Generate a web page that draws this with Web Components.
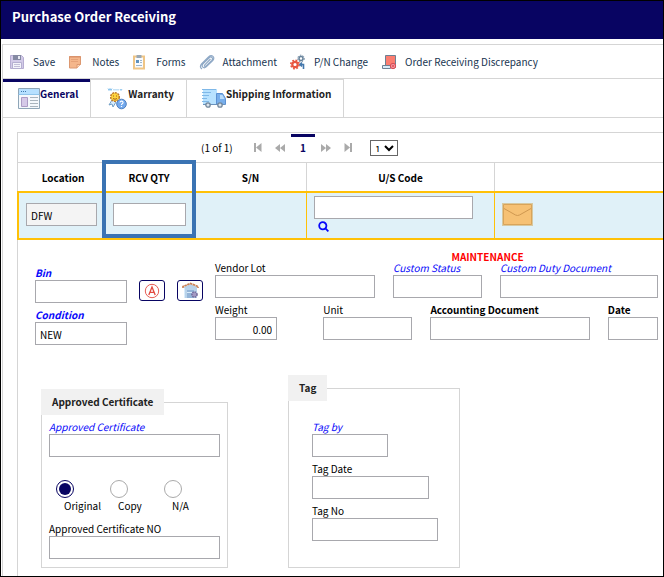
<!DOCTYPE html>
<html lang="en">
<head>
<meta charset="utf-8">
<title>Purchase Order Receiving</title>
<style>
html,body{margin:0}
body{--navy:#080462;--line:#d5d5d5;--field:#a8a8ad;--gold:#ffc107;--blue:#0808fa;
 font:10px/16px "Noto Sans CJK SC","Noto Sans",sans-serif;color:#000;background:#fff}
</style>
</head>
<body>
<receiving-page></receiving-page>
<script>
const BASE = `<style>*,*::before,*::after{box-sizing:border-box}
input,button,select{font:inherit;color:inherit;margin:0}
input:not([type=radio]){display:block;width:100%;height:23px;border:1px solid var(--field);border-radius:0;background:#fff;padding:2px 4px 0;outline:0}
svg{display:block}</style>`;
function define(name, html, setup) {
  const t = document.createElement('template');
  t.innerHTML = BASE + html;
  customElements.define(name, class extends HTMLElement {
    connectedCallback() {
      if (this.shadowRoot) return;
      const root = this.attachShadow({mode: 'open'});
      const content = t.content.cloneNode(true);
      if (setup) setup(this, content);
      root.append(content);
    }
  });
}
const ICONS = {
save:`<svg width="16" height="16" viewBox="0 0 16 16"><path d="M1.500 1.500h11l2 2v11h-13z" fill="#d3cbe8" stroke="#b6add2"/><path d="M4 1h8v5H4z" fill="#858aa3"/><path d="M9 2h2v3H9z" fill="#e8eaf2"/><path d="M3.500 8.500h9v6h-9z" fill="#f4f4fa" stroke="#b5afd0"/><path d="M5 10.500h6M5 12.500h6" stroke="#c3bfd8"/></svg>`,
notes:`<svg width="14" height="14" viewBox="0 0 14 14"><path d="M1.500 1.500h11v8l-3.500 3.500H1.500z" fill="#f5b78c" stroke="#dc9870"/><path d="M1 2h12" stroke="#d98f68"/><path d="M9 13V9.500h3.500" fill="#ffd6b6" stroke="#dc9870"/><path d="M3 4.500h7M3 6.500h7" stroke="#e6a278"/></svg>`,
forms:`<svg width="14" height="16" viewBox="0 0 14 16"><path d="M2 2.500h10v12H2z" fill="#f8fbff" stroke="#efc586" stroke-width="2"/><path d="M4.500 1h5v3h-5z" fill="#9aa8b4"/><path d="M4 6h3v3H4z" fill="#5e90bd"/><path d="M8 6.500h2M8 8.500h2M4 11.500h6" stroke="#9fb8ce"/></svg>`,
clip:`<svg width="16" height="16" viewBox="0 0 16 16" fill="none" stroke="#8fa9c6" stroke-width="1.200"><path d="m11.500 5-5.700 5.800c-1 1.200.3 2.300 1.400 1.200l5.600-5.700c2-2.200-.7-4.400-2.600-2.600L4 9.800c-2.200 2.600.6 5.300 3.200 3L13.700 6.500c3-3.200-.8-6.600-4.200-3.600L2.500 10c-2 2.400-.8 4 .5 5"/></svg>`,
gears:`<svg width="16" height="16" viewBox="0 0 16 16" fill="none"><circle cx="5" cy="10.500" r="2.700" stroke="#e8553f" stroke-width="2.200"/><circle cx="5" cy="10.500" r="4.200" stroke="#e8553f" stroke-width="1.600" stroke-dasharray="1.800 1.500"/><circle cx="11" cy="4.500" r="2" stroke="#66829b" stroke-width="1.500"/><circle cx="11" cy="4.500" r="3.300" stroke="#66829b" stroke-dasharray="1.500 1.300"/><path d="M10.500 10.500h3V15M12 8.500l-2 2 2 2" stroke="#4478ad" stroke-width="1.600"/></svg>`,
disc:`<svg width="16" height="16" viewBox="0 0 16 16"><path d="M4.500 1.500h10v12h-10z" fill="#fb7d70" stroke="#6c8193"/><path d="M1.500 11.500h8v3h-8z" fill="#d9ebf9" stroke="#6c8193"/><circle cx="12" cy="12" r="2.700" fill="#f2919a" stroke="#d84a54"/><path d="M11 11l2 2m0-2l-2 2" stroke="#d84a54" stroke-width=".7"/></svg>`,
general:`<svg width="22" height="22" viewBox="0 0 22 22"><path d="M.5.500h21v20H.5z" fill="#f4f8fc" stroke="#8fa6b8"/><path d="M1 1h20v5H1z" fill="#b6e0ff"/><path d="M.5 6.500h21" stroke="#8fc5ec"/><path d="M3 3.500h1m1 0h1m1 0h1" stroke="#3c78ad"/><path d="M3.500 9.500h6v9h-6z" fill="#d5c9e8" stroke="#ab9bc5"/><path d="M12 9.500h8M12 12.500h8M12 15.500h8M12 18.500h8" stroke="#a9b4bd"/></svg>`,
warranty:`<svg width="22" height="24" viewBox="0 0 22 24"><path d="M2 .5l1 2 1-2 1 2 1-2M8 2.500V1M10 2.500V1M12 2.500V1M14 1l1 1.500L16 1" fill="none" stroke="#6fb6e9" stroke-width=".8"/><path d="m6 12-3 5 3-1 1 3 3-5" fill="#d8edff" stroke="#729fc6"/><circle cx="9" cy="9" r="4.300" fill="#ffd43f" stroke="#bd7b30" stroke-width="1.500" stroke-dasharray="2 .8"/><path d="M7 8h1m2 0h1M7 10.500q2 1.500 4 0" stroke="#a26320" fill="none"/><circle cx="15.500" cy="16" r="4.800" fill="#73a9ed" stroke="#4f7fbe"/><path d="M14 14.500c.2-2 3.300-1.500 3 .2-.2 1-1.500 1-1.500 2.300M15.500 18v1" fill="none" stroke="#fff" stroke-width="1.200"/></svg>`,
truck:`<svg width="24" height="20" viewBox="0 0 24 20"><path d="M1 1h14v15H1z" fill="#b8e2ff"/><path d="M0 1.500h14M0 4.500h9M0 7.500h7M0 10.500h5M0 13.500h7" stroke="#7fb8e8"/><path d="M14.500 5.500h6l3 5v6h-9z" fill="#78aeea" stroke="#5c91d2"/><path d="M18 7h2.500l2 4H18z" fill="#b9dcfa"/><path d="M1 16.500h22" stroke="#6a92bd"/><circle cx="6" cy="17" r="2.200" fill="#dbe4ec" stroke="#71869b" stroke-width="1.300"/><circle cx="18" cy="17" r="2.200" fill="#dbe4ec" stroke="#71869b" stroke-width="1.300"/></svg>`,
first:`<svg width="8" height="9" viewBox="0 0 8 9" fill="#aaa"><path d="M0 0h2v9H0zM7.500 0v9L2 4.500z"/></svg>`,
prev:`<svg width="10" height="8" viewBox="0 0 10 8" fill="#aaa"><path d="M5 0v8L0 4zM10 0v8L5 4z"/></svg>`,
next:`<svg width="10" height="8" viewBox="0 0 10 8" fill="#aaa"><path d="M0 0v8l5-4zM5 0v8l5-4z"/></svg>`,
last:`<svg width="8" height="9" viewBox="0 0 8 9" fill="#aaa"><path d="M6 0h2v9H6zM.5 0v9L6 4.500z"/></svg>`,
search:`<svg width="11" height="11" viewBox="0 0 11 11" fill="none" stroke="#0808fa" stroke-width="1.800"><circle cx="4.800" cy="4.800" r="3.600"/><path d="m7.400 7.400 3 3"/></svg>`,
mail:`<svg width="31" height="23" viewBox="0 0 31 23"><path d="M1 1h29v21H1z" fill="#f6c174" stroke="#d8c9a0" stroke-width="2"/><path d="M1.500 1.500h28v20h-28z" fill="none" stroke="#d9a45a"/><path d="m2 5.500 11.500 6.500q2 1 4 0L29 5.500" fill="none" stroke="#cf9850"/></svg>`,
circleA:`<svg width="16" height="16" viewBox="0 0 16 16" fill="none" stroke="#e2493f"><circle cx="8" cy="8" r="6.700" stroke-width=".9"/><path d="M4.800 12 8 4l3.200 8M6 9.300h4" stroke-width="1.300"/></svg>`,
depot:`<svg width="17" height="17" viewBox="0 0 17 17"><path d="M2 5l6.500-3L15 5v11H2z" fill="#b9d3ea"/><path d="M5 8h7v8H5z" fill="#94b5d8"/><path d="M5 10.500h7M2.500 6v10" stroke="#d9ecfb"/><path d="M1 6V4.500l7.500-3 7.500 3V6" fill="none" stroke="#c98054" stroke-width="1.700" stroke-dasharray="2.500 .5"/><circle cx="12.500" cy="12.500" r="2.600" fill="#a39ac3" stroke="#6e6596" stroke-width="1.400" stroke-dasharray="1.500 .9"/></svg>`
};
define('po-icon', `<style>:host{display:block;flex:none}</style><span></span>`,
  (el, r) => r.querySelector('span').innerHTML = ICONS[el.getAttribute('name')]);

define('page-title', `<style>:host{display:block;background:var(--navy);color:#fff;padding:6px 11px 12px}
h1{margin:0;font-size:13px;line-height:20px;font-weight:700}</style><h1><slot></slot></h1>`);

define('tool-button', `<style>:host{display:block}
button{display:flex;align-items:center;gap:8px;border:0;background:none;padding:0;color:#173450;white-space:nowrap;line-height:16px}
po-icon{width:16px}</style><button type="button"><po-icon></po-icon><slot></slot></button>`,
  (el, r) => r.querySelector('po-icon').setAttribute('name', el.getAttribute('icon')));

define('tool-bar', `<style>:host{display:flex;align-items:center;gap:13px;height:34px;padding:0 6px;border-top:1px solid var(--line)}</style><slot></slot>`);

define('tab-button', `<style>:host{display:block;border-right:1px solid var(--line)}
button{display:flex;align-items:flex-start;height:100%;border:0;border-top:1px solid var(--line);background:none;padding:6px 12px 0 15px;font-weight:700;white-space:nowrap;color:#222}
po-icon{margin-top:2px}
:host([active]) button{border-top:3px solid var(--navy);padding-top:4px;color:var(--navy)}</style>
<button type="button"><po-icon></po-icon><slot></slot></button>`,
  (el, r) => r.querySelector('po-icon').setAttribute('name', el.getAttribute('icon')));

define('tab-bar', `<style>:host{display:flex;height:40px;border-top:1px solid var(--line);border-bottom:1px solid var(--line)}</style><slot></slot>`);

define('page-nav', `<style>:host{display:flex;align-items:center;height:30px;padding-left:183px;border-bottom:1px solid var(--line)}
span{width:46px;white-space:nowrap}
button{border:0;background:none;padding:0;height:100%;width:22px;display:grid;place-items:center}
button.on{border-top:3px solid var(--navy);color:var(--navy);font-weight:700;padding-bottom:2px;height:28px;width:24px}
select{height:16px;width:28px;margin-left:11px;border:1px solid #666;border-radius:0;background:#fff;padding:0 0 3px}</style>
<span>(1 of 1)</span><button aria-label="First page"><po-icon name="first"></po-icon></button><button aria-label="Previous page"><po-icon name="prev"></po-icon></button><button class="on">1</button><button aria-label="Next page"><po-icon name="next"></po-icon></button><button aria-label="Last page"><po-icon name="last"></po-icon></button><select aria-label="Rows per page"><option>1</option></select>`);

define('receipt-table', `<style>:host{display:block}
table{width:100%;table-layout:fixed;border-collapse:separate;border-spacing:0}
th{height:28px;padding:2px 0 0;border-right:1px solid var(--line);font-weight:700}
th:first-child{padding-left:6px}
th:last-child,td:last-child{border-right:0}
td{height:49px;padding:3px 8px 5px 9px;background:#e0f1f8;border:solid var(--gold);border-width:2px 1px 2px 0;vertical-align:middle}
td:first-child{border-left-width:2px;padding:3px 6px 5px 7px}
td:last-child{padding-left:7px}
td.top{vertical-align:top;padding:3px 21px 0 7px}
.mark{position:relative}
.mark::after{content:"";position:absolute;inset:-3px -2px -47px -2px;border:4px solid #3a73b3;z-index:1;pointer-events:none}
button{display:block;border:0;padding:0;background:none}
.find{margin:2px 0 0 4px}
input[readonly]{background:#f4f4f4}</style>
<table><colgroup><col style="width:87px"><col style="width:91px"><col style="width:112px"><col style="width:188px"><col></colgroup>
<tr><th id="h1">Location</th><th id="h2" class="mark">RCV QTY</th><th id="h3">S/N</th><th id="h4">U/S Code</th><th></th></tr>
<tr><td><input aria-labelledby="h1" value="DFW" readonly></td><td><input aria-labelledby="h2"></td><td></td><td class="top"><input aria-labelledby="h4"><button class="find" type="button" aria-label="Search codes"><po-icon name="search"></po-icon></button></td><td><button type="button" aria-label="Message"><po-icon name="mail"></po-icon></button></td></tr></table>`);

define('form-field', `<style>:host{display:block;min-width:0}
label{display:block;line-height:14px;white-space:nowrap}
:host([lookup]) label{color:var(--blue);font-style:italic}
:host([strong]) label{font-weight:700}
:host([numeric]) input{text-align:right}</style><label for="f"></label><input id="f">`,
  (el, r) => { r.querySelector('label').textContent = el.getAttribute('label'); r.querySelector('input').setAttribute('value', el.getAttribute('value') || ''); });

define('icon-button', `<style>:host{display:block}
button{display:grid;place-items:center;width:26px;height:21px;padding:0;border:1px solid var(--navy);border-radius:3px;background:#fff}</style><button type="button"><po-icon></po-icon></button>`,
  (el, r) => { r.querySelector('po-icon').setAttribute('name', el.getAttribute('icon')); r.querySelector('button').setAttribute('aria-label', el.getAttribute('label')); });

define('field-group', `<style>:host{display:block}
fieldset{min-width:0;height:100%;margin:0;padding:0;border:1px solid var(--line)}
legend{margin-left:-1px;padding:5px 11px;background:#f1f1f1;font-weight:700;color:#222}</style>
<fieldset><legend></legend><slot></slot></fieldset>`,
  (el, r) => r.querySelector('legend').textContent = el.getAttribute('label'));

define('copy-type', `<style>:host{display:flex}
label{display:flex;flex-direction:column;width:54px;padding-left:7px}
span{padding-left:8px;white-space:nowrap}
input{appearance:none;display:grid;place-items:center;width:18px;height:18px;border:1px solid #aaa;border-radius:50%;background:#fff}
input:checked{border-color:var(--navy)}
input:checked::after{content:"";width:12px;height:12px;border-radius:50%;background:var(--navy)}</style>
<label><input type="radio" name="t" checked><span>Original</span></label><label><input type="radio" name="t"><span>Copy</span></label><label><input type="radio" name="t"><span>N/A</span></label>`);

define('receiving-form', `<style>:host{display:block;padding:12px 5px 0 17px}
.main{display:flex;gap:12px}
.left{width:92px;padding-top:14px;display:grid;gap:5px;align-content:start}
.acts{display:flex;gap:12px;padding-top:28px;align-items:flex-start}
.right{flex:1;min-width:0}
.note{color:#f00;font-weight:700;text-align:center;line-height:9px;padding-left:102px}
.row{display:flex;gap:18px;margin-bottom:5px}
.row>*{flex-basis:0}
.w{padding-right:28px}
.groups{display:flex;align-items:flex-start;gap:60px;padding:30px 0 5px 6px}
.cert{width:187px;margin-top:14px}.tag{width:172px}
.body{padding:5px 7px 8px 7px}
copy-type{margin:23px 0 8px}
.tags{padding:19px 21px 26px 23px;display:grid;gap:5px}
.a{width:76px}.b{width:117px}.c{width:126px}</style>
<div class="main"><div class="left"><form-field lookup strong label="Bin"></form-field><form-field lookup strong label="Condition" value="NEW"></form-field></div>
<div class="acts"><icon-button icon="circleA" label="Auto assign bin"></icon-button><icon-button icon="depot" label="Warehouse"></icon-button></div>
<div class="right"><div class="note">MAINTENANCE</div>
<div class="row"><form-field style="flex-grow:160" label="Vendor Lot"></form-field><form-field style="flex-grow:89" lookup label="Custom Status"></form-field><form-field style="flex-grow:158" lookup label="Custom Duty Document"></form-field></div>
<div class="row"><div style="flex-grow:62" class="w"><form-field numeric label="Weight" value="0.00"></form-field></div><form-field style="flex-grow:89" label="Unit"></form-field><form-field style="flex-grow:159" strong label="Accounting Document"></form-field><form-field style="flex-grow:50" strong label="Date"></form-field></div></div></div>
<div class="groups"><field-group class="cert" label="Approved Certificate"><div class="body"><form-field lookup label="Approved Certificate"></form-field><copy-type></copy-type><form-field label="Approved Certificate NO"></form-field></div></field-group>
<field-group class="tag" label="Tag"><div class="tags"><form-field class="a" lookup label="Tag by"></form-field><form-field class="b" label="Tag Date"></form-field><form-field class="c" label="Tag No"></form-field></div></field-group></div>`);

define('receiving-page', `<style>:host{display:flex;flex-direction:column;box-sizing:border-box;min-height:100vh;border:1px solid #000}
main{flex:1;display:flex;flex-direction:column;margin:5px 0 0 1px;border-left:1px solid var(--line)}
section{flex:1;margin:14px 0 0 14px;border:solid var(--line);border-width:1px 0 0 1px}
receipt-table{margin-left:-1px}</style>
<page-title>Purchase Order Receiving</page-title>
<main><tool-bar><tool-button icon="save">Save</tool-button><tool-button icon="notes">Notes</tool-button><tool-button icon="forms">Forms</tool-button><tool-button icon="clip">Attachment</tool-button><tool-button icon="gears">P/N Change</tool-button><tool-button icon="disc">Order Receiving Discrepancy</tool-button></tool-bar>
<tab-bar><tab-button active icon="general">General</tab-button><tab-button icon="warranty">Warranty</tab-button><tab-button icon="truck">Shipping Information</tab-button></tab-bar>
<section><page-nav></page-nav><receipt-table></receipt-table><receiving-form></receiving-form></section></main>`);
</script>
</body>
</html>
